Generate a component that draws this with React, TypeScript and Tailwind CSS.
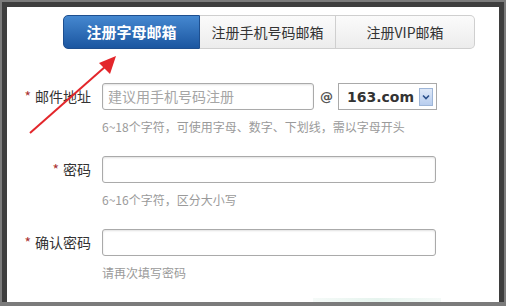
import React from "react";

const cjk = { fontFamily: '"Noto Sans CJK SC", "Liberation Sans", sans-serif' };

function Row({
  label,
  hint,
  children,
}: {
  label: string;
  hint: string;
  children?: React.ReactNode;
}) {
  return (
    <div className="flex flex-col">
      <div className="flex h-[27px] items-center">
        <div className="w-[84px] text-right text-[14px] leading-[27px] text-[#333]">
          <span className="text-[#a33] mr-[4px]">*</span>
          {label}
        </div>
        <div className="ml-[11px] flex items-center">
          {children ?? (
            <div className="h-[27px] w-[334px] rounded-[3px] border border-[#aaa] bg-white shadow-[inset_0_1px_2px_rgba(0,0,0,0.12)]" />
          )}
        </div>
      </div>
      <div className="ml-[95px] mt-[9px] h-[16px] text-[12px] leading-[16px] text-[#9a9a9a]">{hint}</div>
    </div>
  );
}

export default function App() {
  return (
    <div className="relative h-[306px] w-[506px] bg-[#7b7b7b] pt-[2px] pl-[2px] pr-[2px] pb-[4px]" style={cjk}>
      <div className="flex h-full w-full flex-col border-l-[5px] border-t-[5px] border-r-[5px] border-b-0 border-[#3e3e3e] bg-white">
        {/* tabs */}
        <div className="ml-[56px] mt-[8px] flex h-[34px] w-[412px]">
          <div className="flex w-[137px] items-center justify-center rounded-l-[5px] border border-[#1e4f8f] bg-gradient-to-b from-[#4588d0] to-[#1b56a0] text-[15px] font-bold leading-[20px] text-white">
            注册字母邮箱
          </div>
          <div className="flex w-[136px] items-center justify-center border-y border-r border-[#cfcfcf] bg-gradient-to-b from-[#fbfbfb] to-[#ececec] text-[14px] leading-[20px] text-[#333]">
            注册手机号码邮箱
          </div>
          <div className="flex w-[139px] items-center justify-center rounded-r-[5px] border-y border-r border-[#cfcfcf] bg-gradient-to-b from-[#fbfbfb] to-[#ececec] text-[14px] leading-[20px] text-[#333]">
            注册VIP邮箱
          </div>
        </div>

        {/* form */}
        <div className="mt-[34px] flex flex-col gap-[21px]">
          <Row label="邮件地址" hint="6~18个字符，可使用字母、数字、下划线，需以字母开头">
            <div className="flex items-center">
              <div className="flex h-[27px] w-[212px] items-center rounded-[3px] border border-[#aaa] bg-white pl-[5px] text-[14px] text-[#a5a5a5] shadow-[inset_0_1px_2px_rgba(0,0,0,0.12)]">
                建议用手机号码注册
              </div>
              <span
                className="ml-[6px] text-[13px] font-bold leading-[20px] text-[#555]"
                style={{ fontFamily: '"DejaVu Sans", sans-serif' }}
              >
                @
              </span>
              <div className="ml-[5px] flex h-[27px] w-[99px] items-center border border-[#a9a9a9] bg-white pl-[8px]">
                <span
                  className="text-[14px] font-bold leading-[20px] text-[#333]"
                  style={{ fontFamily: '"DejaVu Sans", sans-serif' }}
                >
                  163.com
                </span>
                <div className="ml-[5px] flex h-[18px] w-[14px] items-center justify-center border border-[#9eb6d8] bg-gradient-to-b from-[#dfe9f8] to-[#b8cdee]">
                  <svg width="8" height="6" viewBox="0 0 8 6">
                    <path d="M1 1.5 L4 4.5 L7 1.5" fill="none" stroke="#2b4f8a" strokeWidth="1.6" />
                  </svg>
                </div>
              </div>
            </div>
          </Row>
          <Row label="密码" hint="6~16个字符，区分大小写" />
          <Row label="确认密码" hint="请再次填写密码" />
        </div>
        <div className="mt-auto ml-[306px] h-[4px] w-[128px] bg-gradient-to-r from-[#f5faf8] via-[#e6f4ee] to-[#f5faf8]" />
      </div>

      {/* red annotation arrow */}
      <svg className="pointer-events-none absolute left-0 top-0" width="506" height="306">
        <line x1="30" y1="133" x2="106" y2="66" stroke="#e3262b" strokeWidth="2" />
        <polygon points="116,56 99,63 110,74" fill="#e3262b" />
      </svg>
    </div>
  );
}
